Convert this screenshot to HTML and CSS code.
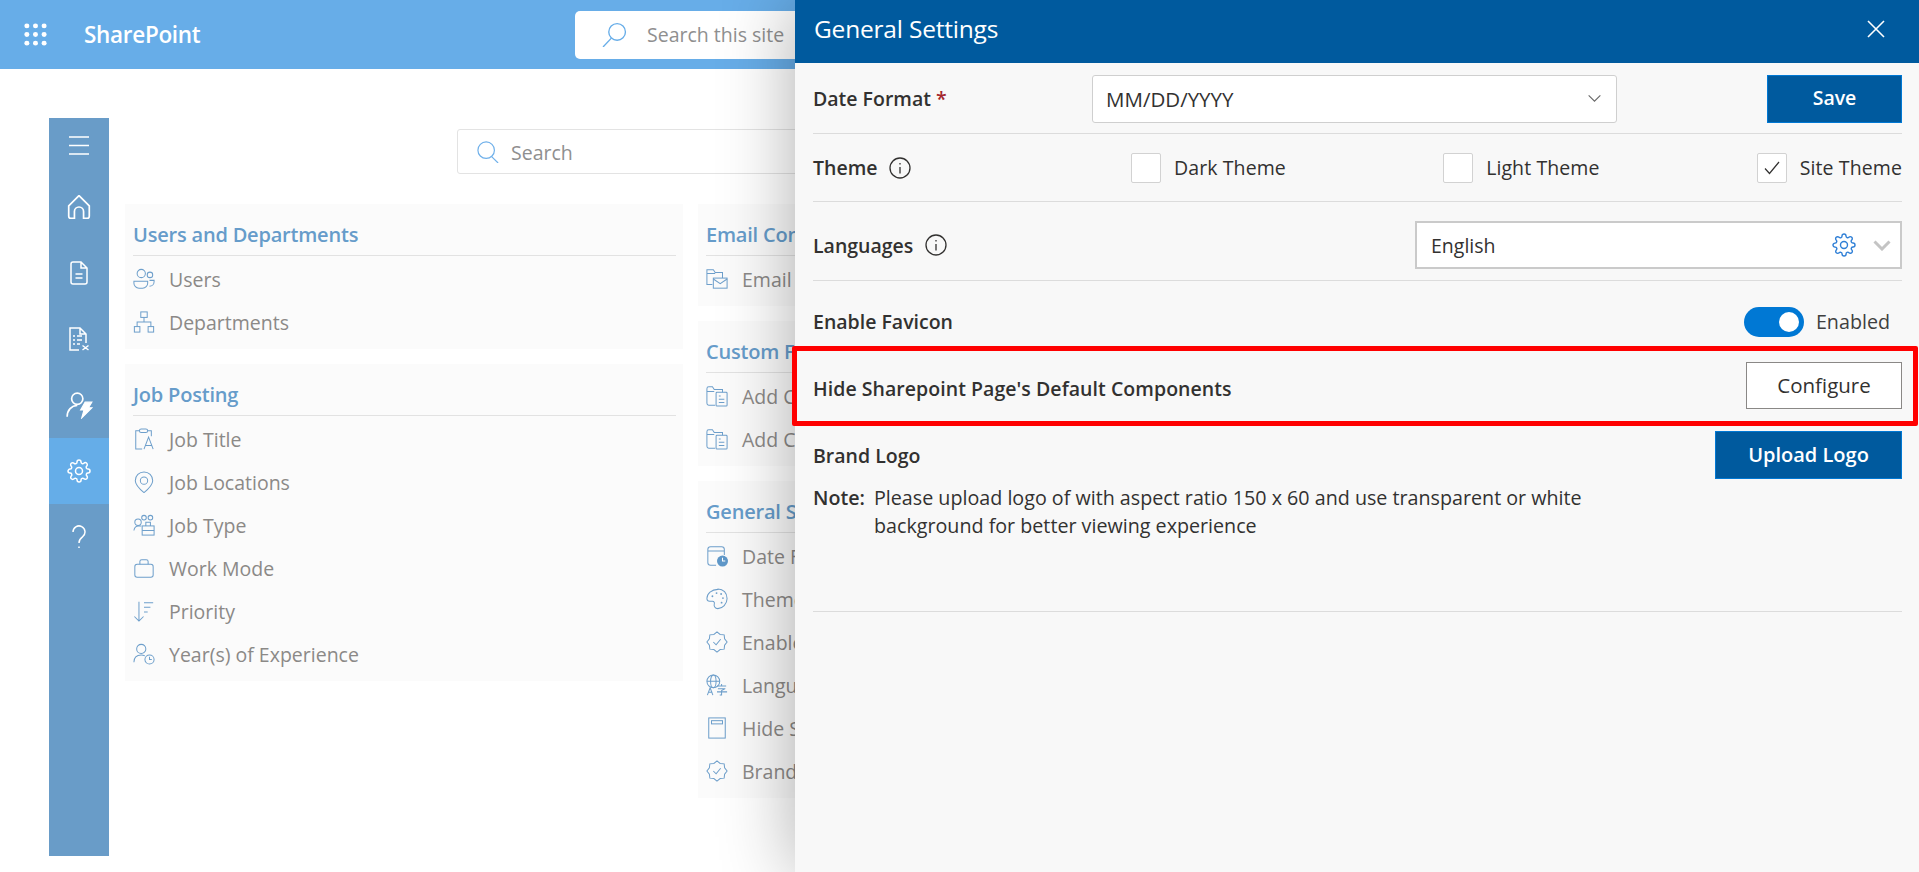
FILE: index.html
```html
<!DOCTYPE html>
<html lang="en">
<head>
    <meta charset="UTF-8">
    <meta name="viewport" content="width=device-width, initial-scale=1.0">
    <title>General Settings</title>
    <link rel="stylesheet" href="styles.css">
</head>
<body>
    <header class="topbar">
        <svg class="waffle" viewBox="0 0 24 24"><g fill="#fff"><circle cx="3" cy="3" r="2.6"/><circle cx="12" cy="3" r="2.6"/><circle cx="21" cy="3" r="2.6"/><circle cx="3" cy="12" r="2.6"/><circle cx="12" cy="12" r="2.6"/><circle cx="21" cy="12" r="2.6"/><circle cx="3" cy="21" r="2.6"/><circle cx="12" cy="21" r="2.6"/><circle cx="21" cy="21" r="2.6"/></g></svg>
        <span class="brand">SharePoint</span>
        <div class="site-search">
            <svg class="site-search-icon" viewBox="0 0 24 24"><circle cx="14.5" cy="9.5" r="8"/><path d="M9 15.5 1 24"/></svg>
            <span>Search this site</span>
        </div>
    </header>

    <div class="main">
        <nav class="sidenav">
            <div class="nav-item nav-first"><svg class="nav-icon" viewBox="0 0 24 24"><path d="M2 3h20M2 11.500h20M2 20h20"/></svg></div>
            <div class="nav-item"><svg class="nav-icon" viewBox="2.500 1.500 19 21"><path d="M3 11 12 2l9 9v9a2 2 0 0 1-2 2h-3v-6a4 4 0 0 0-8 0v6H5a2 2 0 0 1-2-2z"/></svg></div>
            <div class="nav-item"><svg class="nav-icon" viewBox="0 0 24 24"><path d="M4 3a2 2 0 0 1 2-2h8l6 6v14a2 2 0 0 1-2 2H6a2 2 0 0 1-2-2zM14 1v6h6M8.500 13h7M8.500 17h7"/></svg></div>
            <div class="nav-item"><svg class="nav-icon" viewBox="1 0 22 24"><path d="M12 23H3V1h10l6 6v9M13 1v6h6M6 9h2M10 9h5M6 13h2M10 13h5M6 17h2M10 17h3M15.500 18.500l6 4.500M21.500 18.500l-6 4.500"/></svg></div>
            <div class="nav-item"><svg class="nav-icon nav-icon-wide" viewBox="0 0 24 24"><circle cx="10" cy="6" r="5"/><path d="M1 22c0-6 4-10 9-10"/><path class="solid" d="M17 9h6l-3 5h3l-9 9 2-7h-3z"/></svg></div>
            <div class="nav-item active"><svg class="nav-icon" viewBox="0 0 24 24"><circle cx="12" cy="12" r="3.500"/><path d="M19.400 15a1.650 1.650 0 0 0 .33 1.820l.06.06a2 2 0 0 1 0 2.830 2 2 0 0 1-2.830 0l-.06-.06a1.650 1.650 0 0 0-1.820-.33 1.650 1.650 0 0 0-1 1.510V21a2 2 0 0 1-2 2 2 2 0 0 1-2-2v-.09A1.650 1.650 0 0 0 9 19.400a1.650 1.650 0 0 0-1.820.33l-.06.06a2 2 0 0 1-2.830 0 2 2 0 0 1 0-2.830l.06-.06a1.650 1.650 0 0 0 .33-1.820 1.650 1.650 0 0 0-1.510-1H3a2 2 0 0 1-2-2 2 2 0 0 1 2-2h.09A1.650 1.650 0 0 0 4.600 9a1.650 1.650 0 0 0-.33-1.820l-.06-.06a2 2 0 0 1 0-2.830 2 2 0 0 1 2.830 0l.06.06a1.650 1.650 0 0 0 1.820.33H9a1.650 1.650 0 0 0 1-1.510V3a2 2 0 0 1 2-2 2 2 0 0 1 2 2v.09a1.650 1.650 0 0 0 1 1.510 1.650 1.650 0 0 0 1.820-.33l.06-.06a2 2 0 0 1 2.830 0 2 2 0 0 1 0 2.830l-.06.06a1.650 1.650 0 0 0-.33 1.820V9a1.650 1.650 0 0 0 1.510 1H21a2 2 0 0 1 2 2 2 2 0 0 1-2 2h-.09a1.650 1.650 0 0 0-1.510 1z"/></svg></div>
            <div class="nav-item"><svg class="nav-icon" viewBox="0 0 24 24"><path d="M6 7a6 6 0 1 1 9.500 4.800C13 13.600 12 15 12 18M12 21.500V23"/></svg></div>
        </nav>

        <div class="content">
            <div class="search">
                <svg class="search-icon" viewBox="0 0 24 24"><circle cx="10" cy="10" r="9"/><path d="m16 17 7 7"/></svg>
                <span>Search</span>
            </div>
            <div class="columns">
                <div class="column">
                    <section class="card">
                        <h3 class="card-title">Users and Departments</h3>
                        <ul class="card-list">
                            <li><svg class="ic" viewBox="0 0 24 24"><circle cx="9" cy="6" r="4.500"/><circle cx="18.500" cy="7.500" r="3"/><path d="M1 14.500h15v2a5.500 5.500 0 0 1-5.500 5.500h-4A5.500 5.500 0 0 1 1 16.500zM18 13.500h5v1.500a5 5 0 0 1-5 5"/></svg>Users</li>
                            <li><svg class="ic" viewBox="0 0 24 24"><rect x="8.500" y="1" width="7" height="6"/><path d="M12 7v5M4.500 17v-5h15v5"/><rect x="1.500" y="17" width="6" height="6"/><rect x="16.500" y="17" width="6" height="6"/></svg>Departments</li>
                        </ul>
                    </section>
                    <section class="card">
                        <h3 class="card-title">Job Posting</h3>
                        <ul class="card-list">
                            <li><svg class="ic" viewBox="0 0 24 24"><path d="M7 3H3v20h7M16 3h4v6"/><rect x="7" y="1" width="9" height="4" rx="2"/><path d="m12 23 5-13 5 13M13.500 19h7"/></svg>Job Title</li>
                            <li><svg class="ic" viewBox="0 0 24 24"><path d="M12 23.500C6 18.500 2.500 15 2.500 10.500a9.500 9.500 0 0 1 19 0c0 4.500-3.500 8-9.500 13z"/><circle cx="12" cy="10.500" r="4"/></svg>Job Locations</li>
                            <li><svg class="ic" viewBox="0 0 24 24"><circle cx="5.500" cy="9" r="3.500"/><path d="M1 18c.5-3.500 2-5 5-5h3"/><circle cx="12" cy="4" r="2.500"/><circle cx="19" cy="4" r="2.500"/><rect x="10" y="13" width="13" height="10"/><path d="M14 13v-4h5v4M10 18h13"/></svg>Job Type</li>
                            <li><svg class="ic" viewBox="0 0 24 24"><rect x="2" y="8" width="20" height="14" rx="2.500"/><path d="M7.500 8V5a2 2 0 0 1 2-2h5a2 2 0 0 1 2 2v3"/></svg>Work Mode</li>
                            <li><svg class="ic" viewBox="0 0 24 24"><path d="M6.500 2v21M1.500 18l5 5 5-5M12 3h10M12 8h7M12 13h4"/></svg>Priority</li>
                            <li><svg class="ic" viewBox="0 0 24 24"><circle cx="9" cy="6.500" r="5"/><path d="M1 21c0-5 3-8 8-8 2 0 3 .5 4 1"/><circle cx="18" cy="18" r="5"/><path d="M18 15v3h2.500"/></svg>Year(s) of Experience</li>
                        </ul>
                    </section>
                </div>
                <div class="column">
                    <section class="card">
                        <h3 class="card-title">Email Config</h3>
                        <ul class="card-list">
                            <li><svg class="ic" viewBox="0 0 24 24"><path d="M7 18H1V2h7l2 3h8v6M1 6h9"/><rect x="8" y="11" width="15" height="11"/><path d="m8 12 7.500 5 7.500-5"/></svg>Email</li>
                        </ul>
                    </section>
                    <section class="card">
                        <h3 class="card-title">Custom Fields</h3>
                        <ul class="card-list">
                            <li><svg class="ic" viewBox="0 0 24 24"><path d="M10 22H3a2 2 0 0 1-2-2V4a2 2 0 0 1 2-2h4l2 3h9v3M1 7h8"/><rect x="11" y="8" width="12" height="15" rx="1"/><path d="M14 12h2M14 15.500h6M14 19h6"/></svg>Add Col</li>
                            <li><svg class="ic" viewBox="0 0 24 24"><path d="M10 22H3a2 2 0 0 1-2-2V4a2 2 0 0 1 2-2h4l2 3h9v3M1 7h8"/><rect x="11" y="8" width="12" height="15" rx="1"/><path d="M14 12h2M14 15.500h6M14 19h6"/></svg>Add Col</li>
                        </ul>
                    </section>
                    <section class="card">
                        <h3 class="card-title">General Se</h3>
                        <ul class="card-list">
                            <li><svg class="ic" viewBox="0 0 24 24"><path d="M11 22H5a3 3 0 0 1-3-3V5a3 3 0 0 1 3-3h12a3 3 0 0 1 3 3v6M2 6.500h18"/><circle class="solid" cx="18" cy="17.500" r="6"/><path class="hand" d="M18 14v3.500h3"/></svg>Date Format</li>
                            <li><svg class="ic" viewBox="0 0 24 24"><path d="M13 1.500C6 1.500 1 6 1 11.500c0 2 1 3 3 3h3c2 0 2.500 1.500 2 3-.5 2 .5 5 4 5 5 0 10-5 10-11 0-6-4-10.500-10-10.500z"/><g class="dots"><circle cx="7" cy="9" r="1"/><circle cx="11.500" cy="5.500" r="1"/><circle cx="16.500" cy="6.500" r="1"/><circle cx="18.500" cy="11" r="1"/><circle cx="17" cy="16" r="1"/></g></svg>Theme</li>
                            <li><svg class="ic" viewBox="0 0 24 24"><path d="M12 1l3.400 2.700L19.800 4.200l.5 4.400L23 12l-2.700 3.400-.5 4.400-4.400.5L12 23l-3.400-2.700-4.400-.5-.5-4.400L1 12l2.700-3.400.5-4.400 4.400-.5z"/><path d="m8 12 3 3 5-6"/></svg>Enable</li>
                            <li><svg class="ic" viewBox="0 0 24 24"><circle cx="8" cy="8" r="7"/><ellipse cx="8" cy="8" rx="3" ry="7"/><path d="M1 8h14M1.500 23l3-8 3 8M3 20h4M12 13h10M17 11v2M13 16h8l-4 2v5l-2 0M12 19.500h11"/></svg>Language</li>
                            <li><svg class="ic" viewBox="0 0 24 24"><rect x="3" y="1" width="18" height="22"/><rect x="6" y="4" width="12" height="3.500"/></svg>Hide SP</li>
                            <li><svg class="ic" viewBox="0 0 24 24"><path d="M12 1l3.400 2.700L19.800 4.200l.5 4.400L23 12l-2.700 3.400-.5 4.400-4.400.5L12 23l-3.400-2.700-4.400-.5-.5-4.400L1 12l2.700-3.400.5-4.400 4.400-.5z"/><path d="m8 12 3 3 5-6"/></svg>Brand Logo</li>
                        </ul>
                    </section>
                </div>
            </div>
        </div>
    </div>

    <aside class="panel">
        <div class="panel-header">
            <h2>General Settings</h2>
            <svg class="panel-close" viewBox="0 0 18 18"><path d="M1 1l16 16M17 1 1 17"/></svg>
        </div>
        <div class="panel-body">
            <div class="row row-date">
                <label class="row-label label-date">Date Format&nbsp;<span class="req">*</span></label>
                <div class="select select-date">
                    <span>MM/DD/YYYY</span>
                    <svg class="chev" viewBox="0 0 16 10"><path d="m1.500 1.500 6.500 6.500 6.500-6.500"/></svg>
                </div>
                <button class="btn btn-primary btn-save">Save</button>
            </div>
            <div class="row row-theme">
                <div class="row-label label-theme">Theme
                    <svg class="info" viewBox="0 0 22 22"><circle cx="11" cy="11" r="10"/><path d="M11 10v6.500M11 6v1.600"/></svg>
                </div>
                <div class="theme-options">
                    <label class="check"><span class="box"></span>Dark Theme</label>
                    <label class="check"><span class="box"></span>Light Theme</label>
                    <label class="check"><span class="box"><svg viewBox="0 0 16 14"><path d="m1 7.500 4.500 5L15 1"/></svg></span>Site Theme</label>
                </div>
            </div>
            <div class="row row-lang">
                <div class="row-label">Languages
                    <svg class="info" viewBox="0 0 22 22"><circle cx="11" cy="11" r="10"/><path d="M11 10v6.500M11 6v1.600"/></svg>
                </div>
                <div class="select select-lang">
                    <span>English</span>
                    <svg class="lang-gear" viewBox="0 0 24 24"><circle cx="12" cy="12" r="3.500"/><path d="M19.400 15a1.650 1.650 0 0 0 .33 1.820l.06.06a2 2 0 0 1 0 2.830 2 2 0 0 1-2.830 0l-.06-.06a1.650 1.650 0 0 0-1.820-.33 1.650 1.650 0 0 0-1 1.510V21a2 2 0 0 1-2 2 2 2 0 0 1-2-2v-.09A1.650 1.650 0 0 0 9 19.400a1.650 1.650 0 0 0-1.820.33l-.06.06a2 2 0 0 1-2.830 0 2 2 0 0 1 0-2.830l.06-.06a1.650 1.650 0 0 0 .33-1.820 1.650 1.650 0 0 0-1.510-1H3a2 2 0 0 1-2-2 2 2 0 0 1 2-2h.09A1.650 1.650 0 0 0 4.600 9a1.650 1.650 0 0 0-.33-1.820l-.06-.06a2 2 0 0 1 0-2.830 2 2 0 0 1 2.830 0l.06.06a1.650 1.650 0 0 0 1.820.33H9a1.650 1.650 0 0 0 1-1.510V3a2 2 0 0 1 2-2 2 2 0 0 1 2 2v.09a1.650 1.650 0 0 0 1 1.510 1.650 1.650 0 0 0 1.820-.33l.06-.06a2 2 0 0 1 2.830 0 2 2 0 0 1 0 2.830l-.06.06a1.650 1.650 0 0 0-.33 1.820V9a1.650 1.650 0 0 0 1.510 1H21a2 2 0 0 1 2 2 2 2 0 0 1-2 2h-.09a1.650 1.650 0 0 0-1.510 1z"/></svg>
                    <svg class="lang-chev" viewBox="0 0 18 11"><path d="m1.500 1.500 7.500 7.500 7.500-7.500"/></svg>
                </div>
            </div>
            <div class="row row-favicon">
                <div class="row-label">Enable Favicon</div>
                <div class="toggle-wrap">
                    <span class="toggle"><span class="knob"></span></span>
                    <span class="toggle-text">Enabled</span>
                </div>
            </div>
            <div class="row row-hide">
                <div class="row-label label-hide">Hide Sharepoint Page's Default Components</div>
                <button class="btn btn-default">Configure</button>
                <div class="highlight"></div>
            </div>
            <div class="row row-logo">
                <div class="row-label">Brand Logo</div>
                <button class="btn btn-primary btn-upload">Upload Logo</button>
            </div>
            <div class="note">
                <strong>Note:</strong>
                <p>Please upload logo of with aspect ratio 150 x 60 and use transparent or white background for better viewing experience</p>
            </div>
        </div>
    </aside>
</body>
</html>
```

FILE: styles.css
```css
* {
    box-sizing: border-box;
}

body {
    margin: 0;
    height: 872px;
    overflow: hidden;
    background: #fff;
    font-family: "Open Sans", "Noto Sans", sans-serif;
    font-size: 19.5px;
    color: #323130;
}

.topbar {
    display: flex;
    align-items: center;
    height: 69px;
    padding-left: 24px;
    background: #67ade8;
}

.waffle {
    width: 23px;
    height: 23px;
}

.brand {
    width: 491px;
    padding-left: 37px;
    color: #fff;
    font-size: 22.5px;
    font-weight: 600;
    letter-spacing: -0.3px;
}

.site-search {
    display: flex;
    align-items: center;
    width: 600px;
    height: 48px;
    margin-left: 37px;
    padding-left: 27px;
    background: #fff;
    border-radius: 5px;
    color: #8f8f8f;
}

.site-search-icon {
    width: 25px;
    height: 25px;
    margin-right: 20px;
    fill: none;
    stroke: #67ade8;
    stroke-width: 1.3;
}

.main {
    display: flex;
    padding: 49px 0 0 49px;
}

.sidenav {
    flex: none;
    width: 60px;
    height: 738px;
    background: #699cc8;
}

.nav-item {
    display: flex;
    align-items: center;
    justify-content: center;
    height: 66px;
}

.nav-first {
    height: 56px;
}

.nav-item.active {
    background: #65ade8;
}

.nav-icon {
    width: 24px;
    height: 24px;
    fill: none;
    stroke: #fff;
    stroke-width: 1.5;
}

.nav-icon-wide {
    width: 27px;
    height: 27px;
}

.nav-icon .solid {
    fill: #fff;
    stroke-width: 1;
}

.content {
    flex: 1;
    padding: 11px 0 0 16px;
}

.search {
    display: flex;
    align-items: center;
    width: 700px;
    height: 45px;
    margin-left: 332px;
    margin-bottom: 30px;
    padding: 1px 0 0 19px;
    border: 1px solid #e3e3e3;
    border-radius: 3px;
    color: #8f8f8f;
}

.search-icon {
    width: 22px;
    height: 22px;
    margin-right: 12px;
    fill: none;
    stroke: #6fb0ea;
    stroke-width: 1.3;
}

.columns {
    display: flex;
    gap: 15px;
}

.column {
    display: flex;
    flex-direction: column;
    gap: 15px;
    width: 558px;
}

.card {
    padding: 0 7px 5px 8px;
    background: #fbfbfb;
}

.card-title {
    height: 52px;
    margin: 0;
    padding-top: 17px;
    border-bottom: 1px solid #e2e2e2;
    color: #669cca;
    font-size: 20px;
    font-weight: 600;
    line-height: 28px;
    letter-spacing: -0.2px;
}

.card-list {
    margin: 0;
    padding: 2px 0 0;
    list-style: none;
}

.card-list li {
    display: flex;
    align-items: center;
    height: 43px;
    padding-bottom: 1px;
    color: #8b8987;
    white-space: nowrap;
}

.ic {
    flex: none;
    width: 22px;
    height: 22px;
    margin-right: 14px;
    fill: none;
    stroke: #6e9fcb;
    stroke-width: 1.1;
}

.ic .solid {
    fill: #5f98c9;
    stroke: none;
}

.ic .hand {
    stroke: #fff;
}

.ic .dots {
    fill: #6e9fcb;
    stroke: none;
}

.panel {
    position: absolute;
    top: 0;
    right: 0;
    bottom: 0;
    width: 1124px;
    background: #f8f8f8;
    box-shadow: 0 0 70px rgba(0, 0, 0, 0.32);
}

.panel-header {
    display: flex;
    align-items: center;
    justify-content: space-between;
    height: 63px;
    padding: 0 34px 0 19px;
    background: #005a9e;
    color: #fff;
}

.panel-header h2 {
    margin: 0 0 7px;
    font-size: 24.500px;
    font-weight: 400;
    letter-spacing: -0.2px;
}

.panel-close {
    width: 18px;
    height: 18px;
    margin-bottom: 5px;
    fill: none;
    stroke: #fff;
    stroke-width: 1.6;
}

.panel-body {
    padding: 0 17px 0 18px;
}

.row {
    display: flex;
    align-items: center;
    position: relative;
}

.row-label {
    display: flex;
    align-items: center;
    font-weight: 600;
    white-space: nowrap;
}

.row-date {
    height: 71px;
    padding-top: 1px;
    border-bottom: 1px solid #dcdcdc;
}

.label-date {
    width: 279px;
}

.req {
    color: #a4262c;
}

.select {
    display: flex;
    align-items: center;
    height: 48px;
    background: #fff;
    border: 1px solid #cfcfcf;
}

.select-date {
    justify-content: space-between;
    width: 525px;
    padding: 0 14px 0 13px;
    border-radius: 3px;
    font-size: 20.500px;
}

.chev {
    width: 15px;
    height: 9px;
    fill: none;
    stroke: #666;
    stroke-width: 1.2;
}

.btn {
    height: 48px;
    padding: 0 0 2px;
    font-family: inherit;
    font-size: 19.5px;
    font-weight: 600;
    cursor: pointer;
}

.btn-primary {
    background: #005a9e;
    border: 1px solid #0078d4;
    color: #fff;
}

.btn-save {
    width: 135px;
    margin-left: auto;
}

.row-theme {
    height: 68px;
    border-bottom: 1px solid #dcdcdc;
}

.label-theme {
    width: 318px;
}

.info {
    width: 22px;
    height: 22px;
    margin-left: 12px;
    fill: none;
    stroke: #323130;
    stroke-width: 1.3;
}

.theme-options {
    display: flex;
    flex: 1;
    justify-content: space-between;
}

.check {
    display: flex;
    align-items: center;
    gap: 13px;
    letter-spacing: 0.1px;
}

.box {
    display: flex;
    align-items: center;
    justify-content: center;
    width: 30px;
    height: 30px;
    background: #fff;
    border: 1px solid #d2d2d2;
    border-radius: 2px;
}

.box svg {
    width: 16px;
    height: 14px;
    fill: none;
    stroke: #323130;
    stroke-width: 1.2;
}

.row-lang {
    justify-content: space-between;
    height: 79px;
    padding-top: 8px;
    border-bottom: 1px solid #dcdcdc;
}

.select-lang {
    width: 487px;
    padding: 0 9px 0 14px;
    border: 2px solid #cacaca;
}

.select-lang span {
    flex: 1;
}

.lang-gear {
    width: 24px;
    height: 24px;
    margin-right: 17px;
    fill: none;
    stroke: #2f7fd6;
    stroke-width: 1.4;
}

.lang-chev {
    width: 18px;
    height: 11px;
    fill: none;
    stroke: #c4c4c4;
    stroke-width: 3;
}

.row-favicon {
    justify-content: space-between;
    height: 81px;
}

.toggle-wrap {
    display: flex;
    align-items: center;
    gap: 12px;
    padding-right: 12px;
    color: #3f3f3f;
    font-size: 19.7px;
}

.toggle {
    display: flex;
    align-items: center;
    justify-content: flex-end;
    width: 60px;
    height: 30px;
    padding-right: 5px;
    background: #0078d4;
    border-radius: 15px;
}

.knob {
    width: 20px;
    height: 20px;
    background: #fff;
    border-radius: 50%;
}

.row-hide {
    justify-content: space-between;
    height: 47px;
}

.label-hide {
    padding-top: 5px;
    letter-spacing: 0.05px;
}

.btn-default {
    width: 156px;
    height: 47px;
    background: #fff;
    border: 1px solid #8a8886;
    color: #323130;
    font-size: 20.5px;
    font-weight: 500;
}

.highlight {
    position: absolute;
    top: -16px;
    right: -16px;
    bottom: -17px;
    left: -21px;
    border: 5px solid #f00;
    border-radius: 2px;
    pointer-events: none;
}

.row-logo {
    justify-content: space-between;
    height: 48px;
    margin-top: 22px;
}

.btn-upload {
    width: 187px;
    font-size: 20px;
}

.note {
    display: flex;
    height: 133px;
    padding-top: 5px;
    border-bottom: 1px solid #dcdcdc;
    font-size: 19.7px;
    line-height: 28px;
}

.note strong {
    flex: none;
    width: 61px;
    font-weight: 600;
}

.note p {
    width: 730px;
    margin: 0;
}
```
